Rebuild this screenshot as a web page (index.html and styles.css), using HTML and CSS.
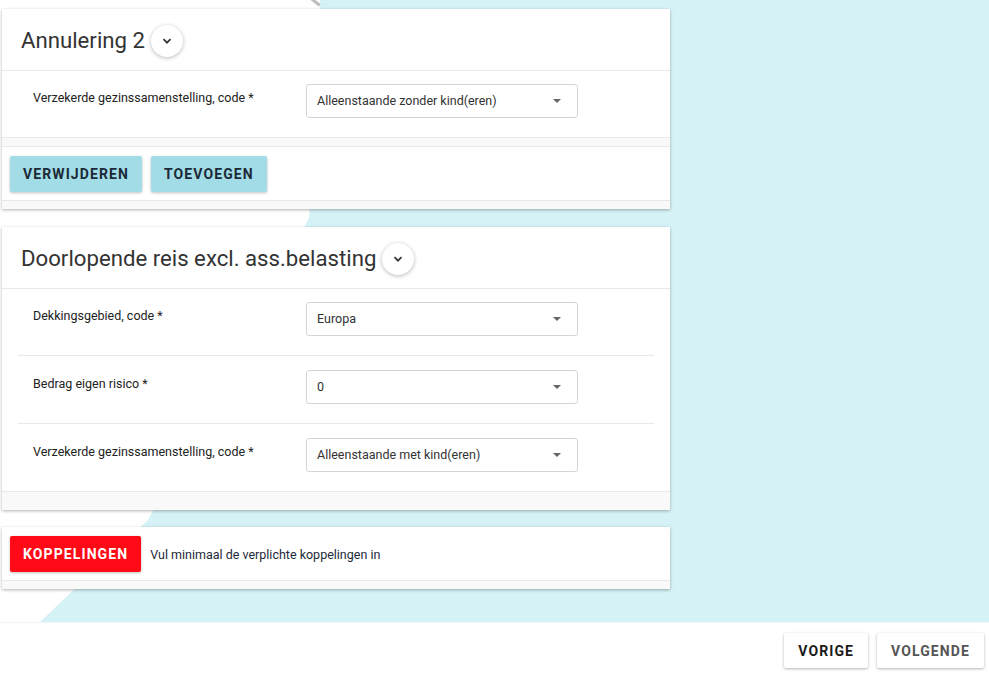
FILE: index.html
```html
<!DOCTYPE html>
<html lang="nl">
<head>
    <meta charset="UTF-8">
    <title>Reisverzekering - dekkingen</title>
    <meta name="viewport" content="width=device-width, initial-scale=1.0">
    <link rel="stylesheet" href="styles.css">
</head>
<body>
    <div class="main">
        <div class="cards">

            <div class="card">
                <div class="card-header">
                    <h2>Annulering 2</h2>
                    <button class="toggle-button" aria-label="Inklappen">
                        <svg width="12" height="8" viewBox="0 0 12 8"><path d="M2.5 2.2 L6 5.7 L9.5 2.2" fill="none" stroke="#333" stroke-width="1.7"/></svg>
                    </button>
                </div>
                <div class="rows">
                    <div class="row">
                        <div class="row-label">Verzekerde gezinssamenstelling, code *</div>
                        <div class="select">Alleenstaande zonder kind(eren)<span class="caret"></span></div>
                    </div>
                </div>
                <div class="actions">
                    <button class="action-button">Verwijderen</button>
                    <button class="action-button">Toevoegen</button>
                </div>
            </div>

            <div class="card card-no-actions">
                <div class="card-header">
                    <h2>Doorlopende reis excl. ass.belasting</h2>
                    <button class="toggle-button" aria-label="Inklappen">
                        <svg width="12" height="8" viewBox="0 0 12 8"><path d="M2.5 2.2 L6 5.7 L9.5 2.2" fill="none" stroke="#333" stroke-width="1.7"/></svg>
                    </button>
                </div>
                <div class="rows">
                    <div class="row">
                        <div class="row-label">Dekkingsgebied, code *</div>
                        <div class="select">Europa<span class="caret"></span></div>
                    </div>
                    <div class="row">
                        <div class="row-label">Bedrag eigen risico *</div>
                        <div class="select">0<span class="caret"></span></div>
                    </div>
                    <div class="row">
                        <div class="row-label">Verzekerde gezinssamenstelling, code *</div>
                        <div class="select">Alleenstaande met kind(eren)<span class="caret"></span></div>
                    </div>
                </div>
            </div>

            <div class="card">
                <div class="actions actions-first">
                    <button class="action-button danger-button">Koppelingen</button>
                    <span class="hint">Vul minimaal de verplichte koppelingen in</span>
                </div>
            </div>

        </div>
    </div>

    <div class="footer">
        <button class="nav-button">Vorige</button>
        <button class="nav-button nav-button-next">Volgende</button>
    </div>
</body>
</html>
```

FILE: styles.css
```css
body {
    margin: 0;
    padding: 0;
    background-color: white;
    font-family: Roboto, 'Liberation Sans', Arial, sans-serif;
    color: #222;
}

button {
    font-family: inherit;
    cursor: pointer;
}

/* cyan area with the white sweep on the left */
.main {
    position: relative;
    height: 622px;
    background-color: #d5f2f6;
    overflow: hidden;
}

.main::before {
    content: "";
    position: absolute;
    top: 0;
    left: 0;
    width: 330px;
    height: 622px;
    background-color: white;
    clip-path: polygon(0 0, 320px 0, 309px 218px, 148px 520px, 63px 600px, 40px 622px, 0 622px);
}

/* little grey streak at the top of the sweep */
.main::after {
    content: "";
    position: absolute;
    top: -3px;
    left: 300px;
    width: 22px;
    height: 3px;
    background-color: rgba(110, 110, 110, 0.45);
    transform: rotate(38deg);
}

.cards {
    position: relative;
    padding-top: 9px;
    padding-left: 2px;
    width: 668px;
}

.card {
    background-color: #f9f9f9;
    box-shadow: 0 1px 3px rgba(0, 0, 0, 0.3);
    padding-bottom: 8px;
    margin-bottom: 18px;
}

.card-no-actions {
    padding-bottom: 18px;
    margin-bottom: 17px;
}

.card-header {
    display: flex;
    align-items: center;
    height: 61px;
    padding-left: 19px;
    background-color: white;
    border-bottom: 1px solid #e8e8e8;
}

.card-header h2 {
    margin: 0;
    font-size: 22.2px;
    font-weight: 400;
    color: #333;
}

.toggle-button {
    width: 32px;
    height: 32px;
    margin-left: 6px;
    margin-top: 2px;
    border: none;
    border-radius: 50%;
    background-color: white;
    box-shadow: 0 1px 4px rgba(0, 0, 0, 0.28);
    display: flex;
    align-items: center;
    justify-content: center;
    padding: 0;
}

.rows {
    background-color: white;
    border-bottom: 1px solid #e8e8e8;
}

.row {
    display: flex;
    align-items: flex-start;
    height: 66px;
    box-sizing: border-box;
    padding-top: 13px;
    margin: 0 16px;
    border-top: 1px solid #e8e8e8;
}

.row:first-child {
    border-top: none;
}

.row + .row {
    height: 68px;
    padding-top: 14px;
}

.row-label {
    width: 273px;
    padding-left: 15px;
    padding-top: 6px;
    font-size: 12.5px;
    color: #222;
}

.select {
    position: relative;
    width: 272px;
    height: 34px;
    box-sizing: border-box;
    border: 1px solid #d4d4d4;
    border-radius: 3px;
    padding-left: 10px;
    line-height: 32px;
    font-size: 12.5px;
    color: #333;
    background-color: white;
}

.caret {
    position: absolute;
    right: 16px;
    top: 14px;
    width: 0;
    height: 0;
    border-left: 4.5px solid transparent;
    border-right: 4.5px solid transparent;
    border-top: 4.5px solid #666;
}

.actions {
    display: flex;
    align-items: center;
    gap: 9px;
    margin-top: 8px;
    padding: 9px 8px 8px;
    background-color: white;
    border-top: 1px solid #e8e8e8;
    border-bottom: 1px solid #e8e8e8;
}

.actions-first {
    margin-top: 0;
    border-top: none;
}

.action-button {
    height: 36px;
    padding: 0 13px;
    border: none;
    border-radius: 2px;
    background-color: #a2dce7;
    color: #1b2a36;
    font-size: 14px;
    font-weight: 700;
    letter-spacing: 1.1px;
    text-transform: uppercase;
    box-shadow: 0 1px 3px rgba(0, 0, 0, 0.25);
}

.danger-button {
    background-color: #ff0a16;
    color: white;
}

.hint {
    font-size: 12.5px;
    color: #1e2a3a;
}

.footer {
    display: flex;
    justify-content: flex-end;
    gap: 9px;
    padding: 10px 5px 0 0;
    height: 52px;
    box-sizing: border-box;
    border-top: 1px solid #eef6f7;
}

.nav-button {
    height: 35px;
    padding: 0 14px;
    border: none;
    border-radius: 2px;
    background-color: white;
    color: #1a1a1a;
    font-size: 14px;
    font-weight: 700;
    letter-spacing: 1.1px;
    text-transform: uppercase;
    box-shadow: 0 1px 3px rgba(0, 0, 0, 0.3);
}

.nav-button-next {
    color: #555;
}
```
